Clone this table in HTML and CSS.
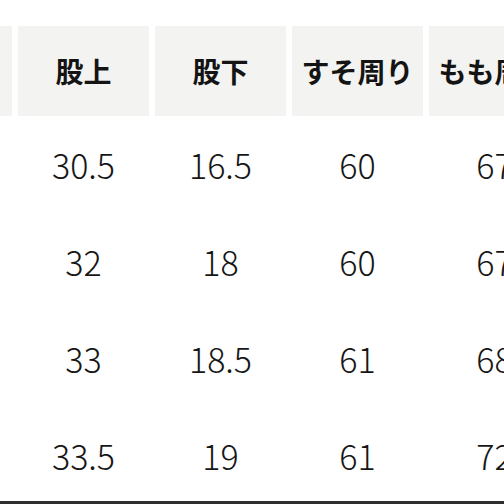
FILE: index.html
```html
<!DOCTYPE html>
<html lang="ja">
<head>
<meta charset="utf-8">
<link rel="stylesheet" href="styles.css">
</head>
<body>
<div class="page">
  <div class="table">
    <div class="row head">
      <div class="cell">サイズ</div>
      <div class="cell">股上</div>
      <div class="cell">股下</div>
      <div class="cell">すそ周り</div>
      <div class="cell">もも周り</div>
    </div>
    <div class="row">
      <div class="cell">S</div>
      <div class="cell">30.5</div>
      <div class="cell">16.5</div>
      <div class="cell">60</div>
      <div class="cell">67</div>
    </div>
    <div class="row">
      <div class="cell">M</div>
      <div class="cell">32</div>
      <div class="cell">18</div>
      <div class="cell">60</div>
      <div class="cell">67</div>
    </div>
    <div class="row">
      <div class="cell">L</div>
      <div class="cell">33</div>
      <div class="cell">18.5</div>
      <div class="cell">61</div>
      <div class="cell">68</div>
    </div>
    <div class="row">
      <div class="cell">XL</div>
      <div class="cell">33.5</div>
      <div class="cell">19</div>
      <div class="cell">61</div>
      <div class="cell">72</div>
    </div>
  </div>
</div>
</body>
</html>
```

FILE: styles.css
```css
html, body {
  margin: 0;
  padding: 0;
  background: #ffffff;
}
body {
  width: 504px;
  height: 504px;
  overflow: hidden;
  font-family: "Noto Sans CJK JP", "Noto Sans", sans-serif;
  color: #1a1a1a;
}
.page {
  width: 504px;
  height: 504px;
  overflow: hidden;
  position: relative;
  padding-top: 26px;
  box-sizing: border-box;
  border-bottom: 3px solid #2e2e2e;
}
.table {
  margin-left: -119px;
  width: 679px;
  display: flex;
  flex-direction: column;
}
.row {
  display: grid;
  grid-template-columns: repeat(5, 131px);
  column-gap: 6px;
  height: 97px;
}
.cell {
  display: flex;
  align-items: center;
  justify-content: center;
  font-size: 34px;
  font-weight: 300;
  line-height: 1;
  color: #161616;
}
.head {
  height: 90px;
}
.head .cell {
  background: #f3f3f1;
  font-size: 28px;
  font-weight: 700;
  color: #141414;
}
```
